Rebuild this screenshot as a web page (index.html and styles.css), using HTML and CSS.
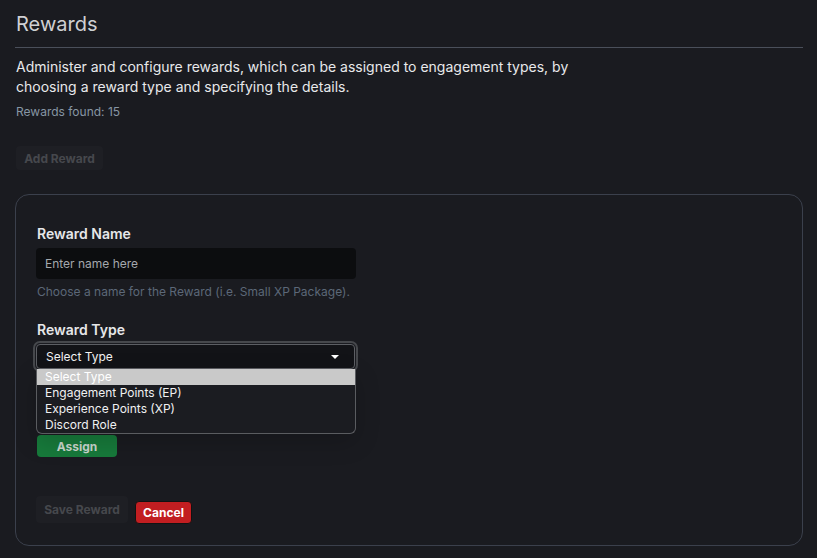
FILE: index.html
```html
<!DOCTYPE html>
<html lang="en">
<head>
<meta charset="utf-8">
<title>Rewards</title>
<link rel="stylesheet" href="styles.css">
</head>
<body>
<main class="page">
  <h1 class="title">Rewards</h1>
  <p class="intro">Administer and configure rewards, which can be assigned to engagement types, by choosing a reward type and specifying the details.</p>
  <div class="count">Rewards found: 15</div>
  <button class="btn btn-muted add-btn" type="button">Add Reward</button>

  <section class="card">
    <div class="field">
      <label class="label">Reward Name</label>
      <div class="input">Enter name here</div>
      <div class="help">Choose a name for the Reward (i.e. Small XP Package).</div>
    </div>

    <div class="field type-field">
      <label class="label">Reward Type</label>
      <div class="select-wrap">
        <div class="select">
          <span>Select Type</span>
          <svg class="caret" width="8" height="4" viewBox="0 0 8 4"><path d="M0 0h8L4 4z" fill="#ffffff"/></svg>
        </div>
        <ul class="dropdown">
          <li class="opt opt-active">Select Type</li>
          <li class="opt">Engagement Points (EP)</li>
          <li class="opt">Experience Points (XP)</li>
          <li class="opt">Discord Role</li>
        </ul>
      </div>
      <div class="under"></div>
      <button class="btn btn-green" type="button">Assign</button>
    </div>

    <div class="actions">
      <button class="btn btn-muted save-btn" type="button">Save Reward</button>
      <button class="btn btn-red" type="button">Cancel</button>
    </div>
  </section>
</main>
</body>
</html>
```

FILE: styles.css
```css
* { box-sizing: border-box; }
html, body { margin: 0; padding: 0; }
body {
  background: #1a1b20;
  font-family: Inter, "Noto Sans", "Liberation Sans", sans-serif;
  color: #e4e5e7;
}
.page {
  padding: 12px 14px 0 15px;
  display: flex;
  flex-direction: column;
  align-items: flex-start;
}
.title {
  margin: 0;
  width: 100%;
  font-size: 20px;
  line-height: 25px;
  font-weight: 400;
  color: #cfd0d3;
  padding: 0 0 10px 1px;
  border-bottom: 1px solid #4a4f5a;
}
.intro {
  margin: 9px 0 0 1px;
  max-width: 590px;
  font-size: 14px;
  line-height: 20px;
  color: #e8e9eb;
}
.count {
  margin: 7px 0 0 1px;
  font-size: 12px;
  line-height: 16px;
  color: #8796a4;
}
.btn {
  font-family: Inter, "Noto Sans", "Liberation Sans", sans-serif;
  font-weight: 700;
  font-size: 12px;
  border: 0;
  border-radius: 4px;
  padding: 0;
  cursor: default;
}
.btn-muted {
  background: #1e1f24;
  color: #46484d;
}
.add-btn {
  margin: 26px 0 0 1px;
  width: 87px;
  height: 24px;
}
.card {
  margin-top: 24px;
  width: 100%;
  border: 1px solid #3b404c;
  border-radius: 14px;
  padding: 30px 20px 21px 20px;
  display: flex;
  flex-direction: column;
  align-items: flex-start;
}
.field {
  display: flex;
  flex-direction: column;
  align-items: flex-start;
}
.label {
  font-size: 14px;
  line-height: 17px;
  font-weight: 600;
  color: #e6e7e9;
  padding-left: 1px;
}
.input {
  margin-top: 6px;
  width: 320px;
  height: 31px;
  background: #0c0d0f;
  border-radius: 4px;
  padding: 0 9px;
  font-size: 12px;
  line-height: 31px;
  color: #a4a8ad;
}
.help {
  margin-top: 5px;
  font-size: 12px;
  line-height: 16px;
  color: #5c6878;
  padding-left: 1px;
}
.type-field { margin-top: 21px; }
.type-field .label { margin-bottom: 6px; }
.select-wrap {
  position: relative;
  width: 320px;
}
.select {
  height: 25px;
  width: 319px;
  border: 1px solid #5c5e63;
  outline: 2px solid #46484c;
  outline-offset: 1px;
  border-radius: 4px;
  background: #121317;
  display: flex;
  align-items: center;
  justify-content: space-between;
  padding: 0 15px 0 9px;
  font-size: 12px;
  color: #f2f2f3;
}
.caret { display: block; margin-top: 1px; }
.dropdown {
  position: absolute;
  top: 25px;
  left: 0;
  width: 320px;
  margin: 0;
  padding: 0;
  list-style: none;
  background: #1b1c21;
  border: 1px solid #5a5c60;
  border-top: 0;
  border-radius: 0 0 6px 6px;
  overflow: hidden;
  box-shadow: 0 8px 24px rgba(0, 0, 0, 0.18);
  z-index: 2;
}
.opt {
  height: 16px;
  line-height: 16px;
  padding-left: 8px;
  font-size: 12px;
  color: #f0f0f1;
}
.opt-active {
  background: #c9c9c9;
  color: #ffffff;
}
.under { height: 66px; }
.btn-green {
  margin-left: 1px;
  width: 80px;
  height: 22px;
  background: #177a3b;
  color: #c9d6cd;
  font-size: 12px;
}
.actions {
  margin-top: 39px;
  display: flex;
  align-items: flex-start;
  gap: 7px;
}
.save-btn {
  width: 92px;
  height: 27px;
}
.btn-red {
  margin-top: 5px;
  width: 57px;
  height: 23px;
  background: #c21e21;
  color: #ffffff;
  border: 1px solid #121212;
  font-size: 12px;
}
```
